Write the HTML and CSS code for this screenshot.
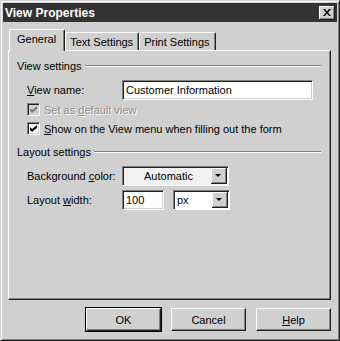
FILE: index.html
```html
<!DOCTYPE html>
<html lang="en">
<head>
    <meta charset="UTF-8">
    <title>View Properties</title>
    <link rel="stylesheet" href="styles.css">
</head>
<body>
    <div class="window">
        <div class="titlebar">
            <span class="title">View Properties</span>
            <span class="close">
                <svg width="8" height="7" viewBox="0 0 8 7">
                    <path d="M0 0h2l2 2.5L6 0h2L5 3.5 8 7H6L4 4.5 2 7H0l3-3.5z" fill="#000"/>
                </svg>
            </span>
        </div>

        <div class="tabs">
            <div class="tab active">General</div>
            <div class="tab">Text Settings</div>
            <div class="tab">Print Settings</div>
        </div>

        <div class="panel">
            <div class="group">
                <span class="group-title">View settings</span>
                <span class="rule"></span>
            </div>
            <div class="row">
                <label class="field-label"><u>V</u>iew name:</label>
                <div class="input wide">Customer Information</div>
            </div>
            <div class="check disabled">
                <span class="box">
                    <svg width="7" height="7" viewBox="0 0 7 7"><path d="M0 2l2 2 5-4v3L2 7 0 5z" fill="#808080"/></svg>
                </span>
                <span>Set as <u>d</u>efault view</span>
            </div>
            <div class="check">
                <span class="box">
                    <svg width="7" height="7" viewBox="0 0 7 7"><path d="M0 2l2 2 5-4v3L2 7 0 5z" fill="#000"/></svg>
                </span>
                <span><u>S</u>how on the View menu when filling out the form</span>
            </div>

            <div class="group second">
                <span class="group-title">Layout settings</span>
                <span class="rule"></span>
            </div>
            <div class="row">
                <label class="field-label">Background <u>c</u>olor:</label>
                <div class="select color">
                    <span class="value center">Automatic</span>
                    <span class="arrow"></span>
                </div>
            </div>
            <div class="row tight">
                <label class="field-label">Layout <u>w</u>idth:</label>
                <div class="input small">100</div>
                <div class="select unit">
                    <span class="value">px</span>
                    <span class="arrow"></span>
                </div>
            </div>
        </div>

        <div class="buttons">
            <button class="default">OK</button>
            <button>Cancel</button>
            <button><u>H</u>elp</button>
        </div>
    </div>
</body>
</html>
```

FILE: styles.css
```css
body {
    margin: 0;
    font-family: "Liberation Sans", Arial, sans-serif;
    font-size: 11px;
    color: #000;
}
.window {
    width: 340px;
    height: 341px;
    box-sizing: border-box;
    background-color: #d0d0d0;
    border-top: 1px solid #d0d0d0;
    border-left: 1px solid #d0d0d0;
    border-right: 1px solid #202020;
    border-bottom: 1px solid #202020;
    box-shadow: inset 1px 1px 0 #fff, inset -1px -1px 0 #808080;
    padding: 2px;
    display: flex;
    flex-direction: column;
}
.titlebar {
    height: 19px;
    flex-shrink: 0;
    background-color: #333;
    display: flex;
    align-items: center;
    justify-content: space-between;
    padding: 0 2px 0 2px;
}
.title {
    color: #fff;
    font-weight: bold;
    font-size: 12px;
}
.close {
    width: 16px;
    height: 14px;
    box-sizing: border-box;
    background-color: #d0d0d0;
    box-shadow: inset -1px -1px 0 #202020, inset 1px 1px 0 #fff, inset -2px -2px 0 #808080;
    display: flex;
    align-items: center;
    justify-content: center;
    padding: 0 1px 1px 0;
}
.tabs {
    display: flex;
    align-items: flex-end;
    margin: 7px 0 0 6px;
    height: 21px;
    flex-shrink: 0;
    position: relative;
    z-index: 1;
}
.tab {
    height: 18px;
    padding: 0 5px 0 4px;
    line-height: 18px;
    box-sizing: border-box;
    border-top: 1px solid #fff;
    border-left: 1px solid #fff;
    border-right: 1px solid #202020;
    border-radius: 2px 2px 0 0;
    box-shadow: inset -1px 0 0 #808080;
}
.tab.active {
    height: 22px;
    padding: 0 8px 0 7px;
    margin-bottom: -1px;
    line-height: 19px;
    background-color: #d0d0d0;
}
.panel {
    margin: 0 6px 0 5px;
    height: 250px;
    flex-shrink: 0;
    box-sizing: border-box;
    border-top: 1px solid #fff;
    border-left: 1px solid #fff;
    border-right: 1px solid #202020;
    border-bottom: 1px solid #202020;
    box-shadow: inset -1px -1px 0 #808080;
    padding: 8px 9px 0 8px;
}
.group {
    display: flex;
    align-items: center;
    gap: 3px;
    height: 14px;
}
.group.second {
    margin-top: 9px;
}
.rule {
    flex: 1;
    height: 0;
    border-top: 1px solid #808080;
    border-bottom: 1px solid #fff;
}
.row {
    display: flex;
    align-items: center;
    margin-top: 7px;
    padding-left: 10px;
}
.row.tight {
    margin-top: 4px;
}
.field-label {
    width: 95px;
    white-space: nowrap;
}
.input {
    height: 20px;
    box-sizing: border-box;
    background-color: #fff;
    border-top: 1px solid #808080;
    border-left: 1px solid #808080;
    border-right: 1px solid #fff;
    border-bottom: 1px solid #fff;
    box-shadow: inset 1px 1px 0 #202020, inset -1px -1px 0 #d0d0d0;
    padding: 0 3px;
    line-height: 18px;
}
.input.wide {
    width: 191px;
}
.input.small {
    width: 42px;
    margin-right: 9px;
}
.check {
    display: flex;
    align-items: center;
    gap: 4px;
    margin-top: 2px;
    padding-left: 10px;
    height: 15px;
    white-space: nowrap;
}
.check + .check {
    margin-top: 4px;
}
.box {
    width: 13px;
    height: 13px;
    flex-shrink: 0;
    box-sizing: border-box;
    background-color: #fff;
    border-top: 1px solid #808080;
    border-left: 1px solid #808080;
    border-right: 1px solid #fff;
    border-bottom: 1px solid #fff;
    box-shadow: inset 1px 1px 0 #202020, inset -1px -1px 0 #d0d0d0;
    display: flex;
    align-items: center;
    justify-content: center;
}
.check.disabled {
    color: #8c8c8c;
    text-shadow: 1px 1px 0 #fff;
}
.check.disabled .box {
    background-color: #d0d0d0;
}
.select {
    height: 20px;
    box-sizing: border-box;
    display: flex;
    align-items: center;
    background-color: #fff;
    border-top: 1px solid #808080;
    border-left: 1px solid #808080;
    border-right: 1px solid #fff;
    border-bottom: 1px solid #fff;
    box-shadow: inset 1px 1px 0 #202020;
    padding: 1px 1px 1px 3px;
}
.select.color {
    width: 107px;
    background-color: #f2f2f2;
}
.select.unit {
    width: 57px;
}
.value {
    flex: 1;
}
.value.center {
    text-align: center;
}
.arrow {
    width: 16px;
    height: 16px;
    box-sizing: border-box;
    background-color: #d0d0d0;
    box-shadow: inset -1px -1px 0 #202020, inset 1px 1px 0 #fff, inset -2px -2px 0 #808080;
    position: relative;
}
.arrow::after {
    content: "";
    position: absolute;
    left: 4px;
    top: 6px;
    border-left: 3px solid transparent;
    border-right: 3px solid transparent;
    border-top: 3px solid #000;
}
.buttons {
    display: flex;
    justify-content: flex-end;
    gap: 10px;
    margin: 8px 6px 0 0;
}
button {
    width: 75px;
    height: 23px;
    font-family: "Liberation Sans", Arial, sans-serif;
    font-size: 11px;
    color: #000;
    background-color: #d0d0d0;
    border: none;
    border-top: 1px solid #fff;
    border-left: 1px solid #fff;
    border-right: 1px solid #202020;
    border-bottom: 1px solid #202020;
    box-shadow: inset -1px -1px 0 #808080;
    padding: 0;
}
button.default {
    outline: 1px solid #000;
}
```
